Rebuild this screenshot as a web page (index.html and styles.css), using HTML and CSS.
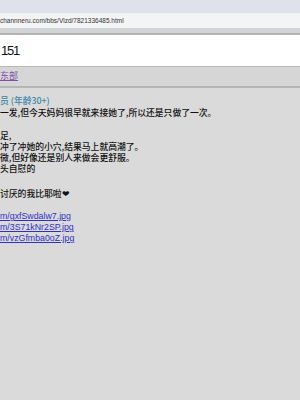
FILE: index.html
```html
<!DOCTYPE html>
<html lang="zh">

<head>
    <meta charset="UTF-8">
    <title>151</title>
    <link rel="stylesheet" href="styles.css">
</head>

<body>
    <div class="chrome"></div>
    <div class="addr">channneru.com/bbs/Vlzd/7821336485.html</div>
    <div class="strip"></div>

    <div class="thread-title">151</div>

    <div class="nav"><a href="#">东部</a></div>

    <div class="post">
        <div class="poster">员 (年龄30+)</div>
        <p>一发,但今天妈妈很早就来接她了,所以还是只做了一次。</p>
        <p class="wide">
            足,<br>
            冲了冲她的小穴,结果马上就高潮了。<br>
            微,但好像还是别人来做会更舒服。<br>
            头自慰的
        </p>
        <p>讨厌的我比耶啦❤</p>
        <p class="links">
            <a href="#">m/gxfSwdalw7.jpg</a><br>
            <a href="#">m/3S71kNr2SP.jpg</a><br>
            <a href="#">m/vzGfmba0oZ.jpg</a>
        </p>
    </div>
</body>

</html>
```

FILE: styles.css
```css
html,
body {
    margin: 0;
    height: 100%;
    overflow: hidden;
    background-color: #dadada;
    font-family: "Noto Sans CJK SC", "Liberation Sans", sans-serif;
}

/* browser window bits */
.chrome {
    height: 13px;
    background-color: #dfe2ea;
    border-bottom: 1px solid #eef0f3;
}

.addr {
    height: 14px;
    line-height: 14px;
    background-color: #f3f4f4;
    font-family: "Liberation Sans", sans-serif;
    font-size: 6.5px;
    color: #333;
    white-space: nowrap;
}

.strip {
    height: 5px;
    background-color: #d2d3d4;
    border-bottom: 2px solid #b2b2b2;
}

/* page */
.thread-title {
    height: 31px;
    line-height: 31px;
    background-color: #fff;
    border-bottom: 1px solid #b8b8b8;
    font-family: "Liberation Sans", sans-serif;
    font-size: 13px;
    letter-spacing: -1.2px;
    padding-left: 1px;
    color: #111;
}

.nav {
    height: 19px;
    line-height: 17px;
    background-color: #d6d6d6;
    border-bottom: 2px solid #b5b5b5;
    font-size: 9px;
}

.nav a {
    color: #8050a8;
}

.post {
    padding-top: 7px;
    font-size: 8.8px;
    font-weight: 500;
    line-height: 11px;
    color: #111;
}

.post p {
    margin: 0 0 12px;
}

.post p.wide {
    margin-bottom: 14px;
}

.poster {
    color: #3a88a8;
    margin-bottom: 1px;
}

.links {
    font-family: "Liberation Sans", sans-serif;
    font-size: 8.8px;
    font-weight: normal;
}

.links a {
    color: #3030c8;
}
```
